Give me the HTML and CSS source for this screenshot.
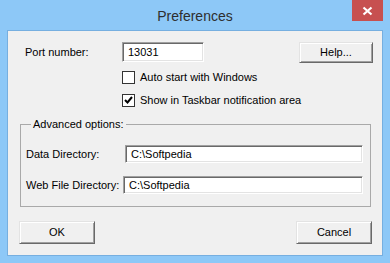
FILE: index.html
```html
<!DOCTYPE html>
<html>
<head>
<meta charset="utf-8">
<link rel="stylesheet" href="styles.css">
</head>
<body>
<div class="window">
  <div class="titlebar">
    <div class="title">Preferences</div>
    <div class="close">
      <svg width="31" height="21" viewBox="0 0 31 21"><path d="M11.5 7.5 L19.5 14.5 M19.5 7.5 L11.5 14.5" stroke="#fff" stroke-width="2.2" fill="none"/></svg>
    </div>
  </div>
  <div class="client">
    <div class="row-port">
      <span class="lbl lbl-port">Port number:</span>
      <div class="edit edit-port">13031</div>
      <div class="btn btn-help">Help...</div>
    </div>
    <div class="check-row first">
      <span class="box"></span><span class="check-text">Auto start with Windows</span>
    </div>
    <div class="check-row second">
      <span class="box"><svg width="11" height="11" viewBox="0 0 11 11"><path d="M2 5 L4.5 7.5 L9 2" stroke="#000" stroke-width="2" fill="none"/></svg></span><span class="check-text">Show in Taskbar notification area</span>
    </div>
    <fieldset class="group">
      <legend>Advanced options:</legend>
      <div class="dir-row">
        <span class="lbl lbl-data">Data Directory:</span>
        <div class="edit edit-dir">C:\Softpedia</div>
      </div>
      <div class="dir-row gap">
        <span class="lbl lbl-web">Web File Directory:</span>
        <div class="edit edit-dir">C:\Softpedia</div>
      </div>
    </fieldset>
    <div class="buttons">
      <div class="btn btn-main">OK</div>
      <div class="btn btn-main">Cancel</div>
    </div>
  </div>
</div>
</body>
</html>
```

FILE: styles.css
```css
* { box-sizing: border-box; }
html, body { margin: 0; padding: 0; }
body {
  width: 390px;
  height: 263px;
  overflow: hidden;
  font-family: "Liberation Sans", Arial, sans-serif;
  font-size: 11px;
  color: #000;
}
.window {
  width: 390px;
  height: 263px;
  background: #8dc8f7;
}
.titlebar {
  height: 30px;
  display: grid;
  grid-template-columns: 1fr auto 1fr;
  align-items: start;
}
.title {
  grid-column: 2;
  font-size: 14px;
  line-height: 16px;
  padding-top: 8px;
  color: #2e2e2e;
}
.close {
  grid-column: 3;
  justify-self: end;
  margin-right: 7px;
  width: 31px;
  height: 21px;
  background: #c75050;
}
.close svg { display: block; }
.client {
  margin: 0 7px;
  height: 226px;
  border: 1px solid #76afe0;
  background: #f0f0f0;
  padding-top: 11px;
}
.row-port {
  display: flex;
  align-items: flex-start;
  padding-left: 17px;
  padding-right: 9px;
}
.lbl {
  line-height: 20px;
  white-space: nowrap;
}
.lbl-port { width: 97px; }
.edit {
  background: #fff;
  border: 1px solid;
  border-color: #a0a0a0 #ffffff #ffffff #a0a0a0;
  box-shadow: inset 1px 1px 0 #696969, inset -1px -1px 0 #e3e3e3;
  padding-left: 5px;
  white-space: nowrap;
}
.edit-port {
  width: 82px;
  height: 20px;
  line-height: 18px;
}
.btn {
  background: #f0f0f0;
  border: 1px solid;
  border-color: #e3e3e3 #696969 #696969 #e3e3e3;
  box-shadow: inset 1px 1px 0 #ffffff, inset -1px -1px 0 #a0a0a0;
  text-align: center;
}
.btn-help {
  margin-left: auto;
  width: 74px;
  height: 21px;
  line-height: 19px;
}
.check-row {
  display: flex;
  align-items: center;
  padding-left: 114px;
  height: 13px;
}
.check-row.first { margin-top: 8px; }
.check-row.second { margin-top: 10px; }
.box {
  width: 13px;
  height: 13px;
  background: #fff;
  border: 1px solid #333;
  display: flex;
  align-items: center;
  justify-content: center;
}
.box svg { display: block; }
.check-text {
  margin-left: 5px;
  line-height: 13px;
}
.group {
  margin: 11px 11px 0 12px;
  padding: 14px 7px 12px 5px;
  border: 1px solid #a9a9a9;
  min-width: 0;
}
.group legend {
  margin-left: 5px;
  padding: 0 2px;
  line-height: 13px;
}
.dir-row {
  display: flex;
  align-items: center;
  height: 18px;
}
.dir-row.gap { margin-top: 13px; }
.lbl-data { width: 99px; line-height: 18px; }
.lbl-web { width: 97px; line-height: 18px; }
.edit-dir {
  flex: 1;
  height: 18px;
  line-height: 16px;
}
.buttons {
  display: flex;
  justify-content: space-between;
  margin-top: 14px;
  padding: 0 10px 0 11px;
}
.btn-main {
  width: 76px;
  height: 23px;
  line-height: 21px;
}
```
